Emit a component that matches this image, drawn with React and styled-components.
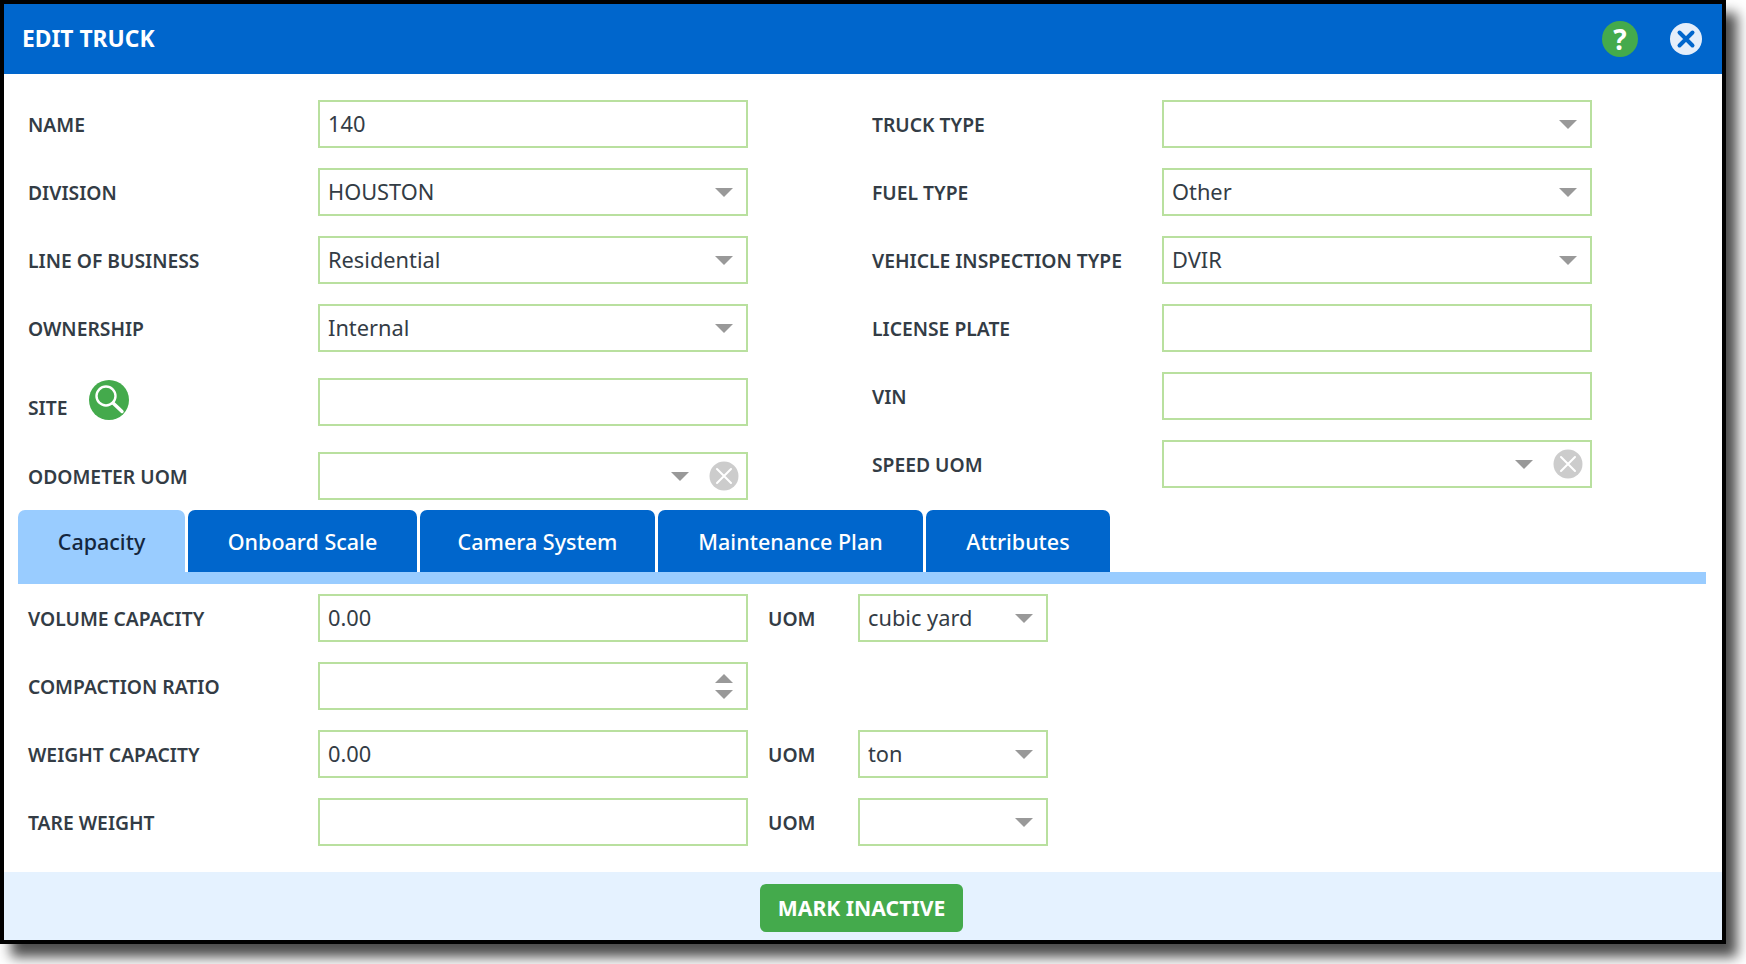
import React from 'react'
import styled, {createGlobalStyle} from 'styled-components'

const GlobalStyle = createGlobalStyle`
    html, body {
        margin: 0;
        padding: 0;
        background: #fff;
        min-height: 100vh;
    }
    body {
        font-family: "Noto Sans", "Open Sans", sans-serif;
        color: #333c45;
    }
`

const Dialog = styled.div`
    width: 1718px;
    height: 936px;
    border: 4px solid #000;
    background: #fff;
    display: flex;
    flex-direction: column;
    box-shadow: 11px 13px 12px rgba(0, 0, 0, 0.7);
`
const Header = styled.header`
    height: 70px;
    flex: none;
    background: #0066cc;
    display: flex;
    align-items: center;
    padding: 0 20px 0 18px;
`
const Title = styled.h1`
    margin: 0 0 2px;
    flex: 1;
    font-size: 22.8px;
    font-weight: 700;
    color: #fff;
`
const HelpButton = styled.span`
    width: 36px;
    height: 36px;
    border-radius: 50%;
    background: #44aa4c;
    color: #fff;
    font-size: 28px;
    font-weight: 700;
    display: flex;
    align-items: center;
    justify-content: center;
    margin-right: 32px;
`
const Body = styled.main`
    flex: 1;
    padding: 26px 16px 0 14px;
`
const Columns = styled.div`
    display: grid;
    grid-template-columns: 720px 720px;
    column-gap: 124px;
    padding-left: 10px;
    height: 410px;
`
const Column = styled.div`
    display: flex;
    flex-direction: column;
`
const Field = styled.div`
    display: flex;
    align-items: center;
    height: 48px;
    margin-top: ${props => props.$top || 0}px;
    margin-bottom: ${props => props.$bottom ?? 20}px;
`
const Label = styled.label`
    width: 290px;
    flex: none;
    display: flex;
    align-items: center;
    font-size: 19.3px;
    font-weight: 600;
    padding-top: 1px;
    color: #333c45;
`
const SiteLabel = styled.span`
    width: 61px;
    padding-top: 10px;
`
const SearchGlyph = styled.svg`
    width: 40px;
    height: 40px;
    margin-bottom: 6px;
`
const Control = styled.div`
    box-sizing: border-box;
    width: ${props => props.$width || 430}px;
    height: 48px;
    flex: none;
    border: 2px solid #b9e09f;
    background: #fff;
    display: flex;
    align-items: center;
    padding-left: 8px;
`
const TextInput = styled.input`
    flex: 1;
    min-width: 0;
    border: 0;
    outline: 0;
    padding: 0 0 2px;
    background: transparent;
    font-family: inherit;
    font-size: 21.8px;
    color: #333c45;
`
const Caret = styled.i`
    width: 0;
    height: 0;
    flex: none;
    border-left: 9px solid transparent;
    border-right: 9px solid transparent;
    border-top: 9px solid #999;
    margin-right: ${props => props.$right ?? 13}px;
`
const Spinner = styled.div`
    display: flex;
    flex-direction: column;
    gap: 7px;
    margin-right: 13px;
`
const SpinUp = styled.i`
    width: 0;
    height: 0;
    border-left: 9px solid transparent;
    border-right: 9px solid transparent;
    border-bottom: 9px solid #999;
`
const SpinDown = styled(SpinUp)`
    border-bottom: 0;
    border-top: 9px solid #999;
`
const ClearGlyph = styled.svg`
    width: 30px;
    height: 30px;
    flex: none;
    margin: 0 7px 0 20px;
`
const TabBar = styled.nav`
    display: flex;
    gap: 3px;
    height: 62px;
    border-bottom: 12px solid #99ccff;
`
const Tab = styled.div`
    width: ${props => props.$width}px;
    display: flex;
    align-items: center;
    justify-content: center;
    border-radius: 7px 7px 0 0;
    background: ${props => (props.$active ? '#99ccff' : '#0066cc')};
    color: ${props => (props.$active ? '#14263d' : '#fff')};
    font-size: 21.5px;
    font-weight: 500;
`
const TabPanel = styled.section`
    padding: 10px 0 0 10px;
`
const UomLabel = styled.label`
    font-size: 19.3px;
    font-weight: 600;
    padding-top: 1px;
    width: 90px;
    margin-left: 20px;
`
const Footer = styled.footer`
    height: 68px;
    flex: none;
    background: #e5f2ff;
    display: flex;
    justify-content: center;
    align-items: flex-start;
    padding: 12px 3px 0 0;
    box-sizing: border-box;
`
const ActionButton = styled.button`
    width: 203px;
    height: 48px;
    border: 0;
    border-radius: 6px;
    background: #44aa4c;
    color: #fff;
    font-family: inherit;
    font-size: 21.2px;
    font-weight: 700;
    padding: 0 0 2px;
`

const CloseIcon = () => (
    <svg width="32" height="32" viewBox="0 0 32 32">
        <circle cx="16" cy="16" r="16" fill="#e4eefa" />
        <path d="M9.5 9.5 22.5 22.5M22.5 9.5 9.5 22.5" stroke="#0066cc" strokeWidth="4" strokeLinecap="round" />
    </svg>
)

const SearchIcon = () => (
    <SearchGlyph viewBox="0 0 40 40">
        <circle cx="20" cy="20" r="20" fill="#44aa4c" />
        <circle cx="17" cy="16" r="9.5" fill="none" stroke="#fff" strokeWidth="2.4" />
        <path d="M24 23 33 31.5" stroke="#fff" strokeWidth="3.4" strokeLinecap="round" />
    </SearchGlyph>
)

const Clear = () => (
    <ClearGlyph viewBox="0 0 30 30">
        <circle cx="15" cy="15" r="14.5" fill="#cccccc" />
        <path d="M8 8 22 22M22 8 8 22" stroke="#fff" strokeWidth="2" strokeLinecap="round" />
    </ClearGlyph>
)

function Input({value = '', width}) {
    return (
        <Control $width={width}>
            <TextInput defaultValue={value} />
        </Control>
    )
}

function SelectBox({value = '', width, clearable}) {
    return (
        <Control $width={width}>
            <TextInput defaultValue={value} />
            <Caret $right={clearable ? 0 : 13} />
            {clearable && <Clear />}
        </Control>
    )
}

const tabs = [
    {name: 'Capacity', width: 167, active: true},
    {name: 'Onboard Scale', width: 229},
    {name: 'Camera System', width: 235},
    {name: 'Maintenance Plan', width: 265},
    {name: 'Attributes', width: 184},
]

export default function App() {
    return (
        <Dialog>
            <GlobalStyle />
            <Header>
                <Title>EDIT TRUCK</Title>
                <HelpButton>?</HelpButton>
                <CloseIcon />
            </Header>
            <Body>
                <Columns>
                    <Column>
                        <Field><Label>NAME</Label><Input value="140" /></Field>
                        <Field><Label>DIVISION</Label><SelectBox value="HOUSTON" /></Field>
                        <Field><Label>LINE OF BUSINESS</Label><SelectBox value="Residential" /></Field>
                        <Field><Label>OWNERSHIP</Label><SelectBox value="Internal" /></Field>
                        <Field $top={6} $bottom={26}>
                            <Label><SiteLabel>SITE</SiteLabel><SearchIcon /></Label>
                            <Input />
                        </Field>
                        <Field><Label>ODOMETER UOM</Label><SelectBox clearable /></Field>
                    </Column>
                    <Column>
                        <Field><Label>TRUCK TYPE</Label><SelectBox /></Field>
                        <Field><Label>FUEL TYPE</Label><SelectBox value="Other" /></Field>
                        <Field><Label>VEHICLE INSPECTION TYPE</Label><SelectBox value="DVIR" /></Field>
                        <Field><Label>LICENSE PLATE</Label><Input /></Field>
                        <Field><Label>VIN</Label><Input /></Field>
                        <Field><Label>SPEED UOM</Label><SelectBox clearable /></Field>
                    </Column>
                </Columns>
                <TabBar>
                    {tabs.map(tab => (
                        <Tab key={tab.name} $width={tab.width} $active={tab.active}>{tab.name}</Tab>
                    ))}
                </TabBar>
                <TabPanel>
                    <Field>
                        <Label>VOLUME CAPACITY</Label>
                        <Input value="0.00" />
                        <UomLabel>UOM</UomLabel>
                        <SelectBox value="cubic yard" width={190} />
                    </Field>
                    <Field>
                        <Label>COMPACTION RATIO</Label>
                        <Control>
                            <TextInput />
                            <Spinner><SpinUp /><SpinDown /></Spinner>
                        </Control>
                    </Field>
                    <Field>
                        <Label>WEIGHT CAPACITY</Label>
                        <Input value="0.00" />
                        <UomLabel>UOM</UomLabel>
                        <SelectBox value="ton" width={190} />
                    </Field>
                    <Field $bottom={0}>
                        <Label>TARE WEIGHT</Label>
                        <Input />
                        <UomLabel>UOM</UomLabel>
                        <SelectBox width={190} />
                    </Field>
                </TabPanel>
            </Body>
            <Footer>
                <ActionButton>MARK INACTIVE</ActionButton>
            </Footer>
        </Dialog>
    )
}
